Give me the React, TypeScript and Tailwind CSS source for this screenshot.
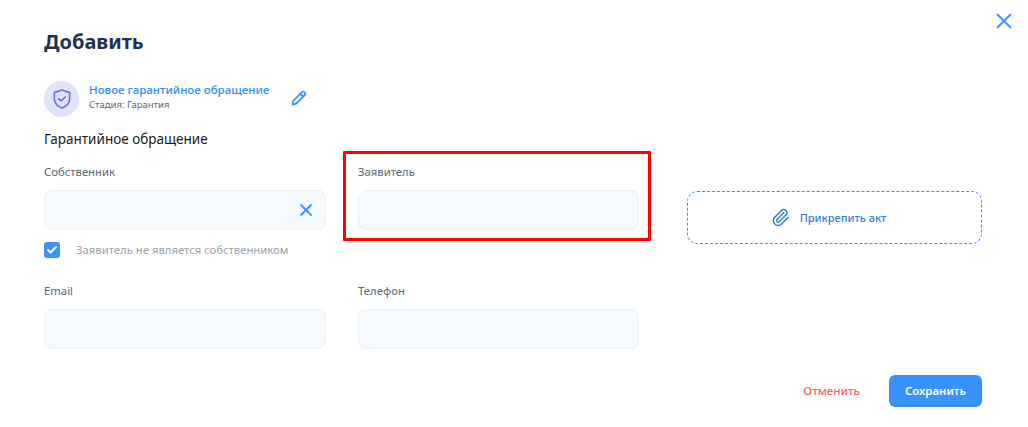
import React from 'react';
import { X, Check, Paperclip } from 'lucide-react';

const Field: React.FC<{ label: string; clear?: boolean; outlined?: boolean; narrow?: boolean }> = ({ label, clear, outlined, narrow }) => (
  <div className={narrow ? 'relative w-[281px]' : 'relative w-[282px]'}>
    {outlined && <div className="absolute left-[-15px] top-[-12px] w-[308px] h-[90px] border-[3px] border-[#ff0000] rounded-[1px]" />}
    <div className="h-[18px] text-[11.3px] leading-[18px] text-[#5b6577]">{label}</div>
    <div className="mt-[9px] h-[40px] bg-[#f4f9fd] border border-[#ecf0f5] rounded-[8px] flex items-center justify-end pr-[9px]">
      {clear && <X className="w-[20px] h-[20px] text-[#3b94fb]" strokeWidth={2.2} />}
    </div>
  </div>
);

export default function App() {
  return (
    <div className="relative w-[1028px] h-[427px] bg-white overflow-hidden pl-[44px] font-['Noto_Sans',sans-serif]">
      <button className="absolute right-[11px] top-[8px] text-[#3b94fb]" aria-label="Закрыть">
        <X className="w-[26px] h-[26px]" strokeWidth={1.7} />
      </button>

      <h2 className="pt-[28px] h-[81px] text-[20px] leading-[28px] font-bold text-[#1d3350]">Добавить</h2>

      {/* Header */}
      <div className="flex items-center h-[36px]">
        <div className="w-[35px] h-[36px] rounded-full bg-[#e1e3fc] flex items-center justify-center">
          <svg width="22" height="22" viewBox="0 0 20 20" fill="none" stroke="#6c6fe8" strokeWidth="1.5" strokeLinecap="round" strokeLinejoin="round">
            <path d="M10 1.800l7 2.400v5.300c0 4-2.900 7-7 8.700-4.100-1.700-7-4.700-7-8.700V4.200z" />
            <path d="M7 9.800l2.200 2 3.800-3.600" />
          </svg>
        </div>
        <div className="ml-[10px] w-[202px] -mt-[3px]">
          <div className="text-[11.5px] leading-[15px] font-medium text-[#2a8bfb] whitespace-nowrap -mt-[1px]">Новое гарантийное обращение</div>
          <div className="text-[9.5px] leading-[16px] text-[#5b6577] whitespace-nowrap">Стадия: Гарантия</div>
        </div>
        <svg className="-mt-[2px]" width="16" height="16" viewBox="0 0 16 16" fill="none" stroke="#3b94fb" strokeWidth="1.800" strokeLinecap="round" strokeLinejoin="round">
          <path d="M1.500 14.500l.8-3.600L11 2.200a1.700 1.700 0 0 1 2.400 0l.4.4a1.700 1.700 0 0 1 0 2.400L5.100 13.700z" />
          <path d="M9.500 3.800l2.700 2.700" />
        </svg>
      </div>

      <div className="mt-[12px] h-[20px] text-[13.5px] leading-[20px] text-[#1a1a1a]">Гарантийное обращение</div>

      <div className="mt-[14px] flex items-start">
        <div className="w-[282px]">
          <Field label="Собственник" clear />
          <div className="mt-[11px] flex items-center h-[18px]">
            <span className="w-[16px] h-[16px] rounded-[3px] bg-[#3b94fb] flex items-center justify-center">
              <Check className="w-[12px] h-[12px] text-white" strokeWidth={3.6} />
            </span>
            <span className="ml-[16px] text-[11.3px] leading-[18px] text-[#9aa1ad]">Заявитель не является собственником</span>
          </div>
        </div>
        <div className="ml-[32px]">
          <Field label="Заявитель" outlined narrow />
        </div>
        <div className="ml-[48px] mt-[28px] w-[295px] h-[53px] border border-dashed border-[#3f8fdf] rounded-[10px] flex items-center justify-center gap-[10px] pr-[12px] text-[#2a7fdf]">
          <Paperclip className="w-[19px] h-[19px]" strokeWidth={1.900} />
          <span className="text-[11px] font-medium leading-[18px]">Прикрепить акт</span>
        </div>
      </div>

      <div className="mt-[23px] flex gap-[32px]">
        <Field label="Email" />
        <Field label="Телефон" narrow />
      </div>

      {/* Footer */}
      <div className="absolute right-[46px] bottom-[20px] flex items-center">
        <span className="text-[11.6px] font-medium text-[#fb5a5f]">Отменить</span>
        <button className="ml-[29px] w-[93px] h-[32px] rounded-[6px] bg-[#3792fc] text-white text-[11.4px] font-semibold">Сохранить</button>
      </div>
    </div>
  );
}
